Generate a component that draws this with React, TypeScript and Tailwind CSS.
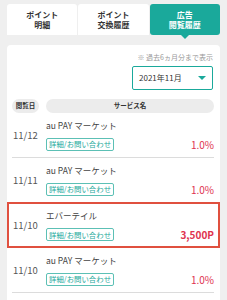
import React from "react";

const font = { fontFamily: '"Noto Sans CJK JP", "Noto Sans", sans-serif' };

type Row = { date: string; name: string; value: string; highlight?: boolean; bold?: boolean };

const rows: Row[] = [
  { date: "11/12", name: "au PAY マーケット", value: "1.0%" },
  { date: "11/11", name: "au PAY マーケット", value: "1.0%" },
  { date: "11/10", name: "エバーテイル", value: "3,500P", highlight: true, bold: true },
  { date: "11/10", name: "au PAY マーケット", value: "1.0%" },
];

export default function App() {
  return (
    <div
      className="w-[227px] h-[300px] bg-[#efefef] overflow-hidden px-[7px] pt-[4px] text-[#333]"
      style={font}
    >
      {/* Tabs */}
      <div className="flex h-[31px] gap-[1px]">
        <div className="flex-1 bg-white rounded-t-[3px] flex flex-col items-center justify-center text-[8px] leading-[10px] font-bold text-[#333]">
          <span>ポイント</span>
          <span>明細</span>
        </div>
        <div className="flex-1 bg-white rounded-t-[3px] flex flex-col items-center justify-center text-[8px] leading-[10px] font-bold text-[#333]">
          <span>ポイント</span>
          <span>交換履歴</span>
        </div>
        <div className="relative flex-1 bg-[#1aa99b] rounded-[3px] flex flex-col items-center justify-center text-[8px] leading-[10px] font-bold text-white">
          <span>広告</span>
          <span>閲覧履歴</span>
          <div className="absolute left-1/2 -translate-x-1/2 top-full w-0 h-0 border-l-[4px] border-r-[4px] border-t-[4px] border-l-transparent border-r-transparent border-t-[#1aa99b]" />
        </div>
      </div>

      {/* Card */}
      <div className="mt-[10px] bg-white rounded-t-[4px] pl-[5px] pr-[6px] pt-[8px] h-[300px]">
        <div className="text-right text-[7px] leading-[9px] text-[#999] pr-[1px]">
          ※ 過去6ヵ月分まで表示
        </div>
        <div className="flex justify-end mt-[4px] pr-[1px]">
          <div className="w-[81px] h-[24px] border border-[#1aa99b] rounded-[2px] flex items-center justify-between pl-[6px] pr-[6px]">
            <span className="text-[8px] text-[#333]">2021年11月</span>
            <div className="w-0 h-0 border-l-[4px] border-r-[4px] border-t-[4px] border-l-transparent border-r-transparent border-t-[#1aa99b]" />
          </div>
        </div>

        {/* Header */}
        <div className="flex gap-[7px] mt-[9px] h-[14px]">
          <div className="w-[27px] rounded-full bg-[#ececec] flex items-center justify-center text-[6.5px] font-bold text-[#333]">
            閲覧日
          </div>
          <div className="flex-1 rounded-full bg-[#ececec] flex items-center justify-center text-[6.5px] font-bold text-[#333]">
            サービス名
          </div>
        </div>

        {rows.map((r, i) => (
          <div
            key={i}
            className={`relative flex items-center gap-[7px] h-[45px] ${r.highlight ? "" : "border-b border-[#dcdcdc]"}`}
          >
            {r.highlight && (
              <div className="absolute -left-[5px] -right-[6px] -top-[1px] bottom-0 border-2 border-[#e0503f] pointer-events-none" />
            )}
            <div className="w-[27px] text-center text-[9.5px] text-[#555]">{r.date}</div>
            <div className="flex-1 flex flex-col pt-[1px]">
              <div className="text-[8.5px] leading-[11px] text-[#444]">{r.name}</div>
              <div className="flex items-center justify-between mt-[6px]">
                <div className="h-[13px] px-[2px] border border-[#5cc0b5] rounded-[2px] flex items-center text-[7.4px] text-[#1aa99b]">
                  詳細/お問い合わせ
                </div>
                <div className={`text-[10px] text-[#e0334f] ${r.bold ? "font-bold" : ""}`}>{r.value}</div>
              </div>
            </div>
          </div>
        ))}
      </div>
    </div>
  );
}
